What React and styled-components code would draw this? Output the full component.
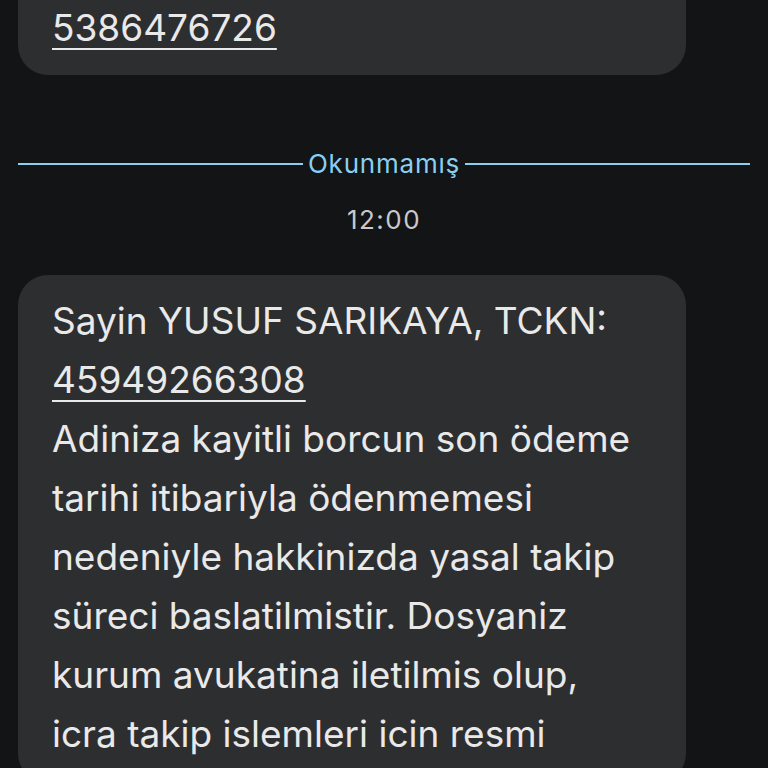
import styled, { createGlobalStyle } from "styled-components";

const Global = createGlobalStyle`
  html, body {
    margin: 0;
    padding: 0;
    background: #131416;
  }
  body {
    font-family: Inter, Roboto, "Noto Sans", sans-serif;
    overflow: hidden;
  }
`;

const Screen = styled.div`
  width: 768px;
  height: 768px;
  overflow: hidden;
  background: #131416;
  display: flex;
  flex-direction: column;
`;

const Bubble = styled.div`
  margin: ${(p) => (p.$cut ? "-2px" : "0")} 82px 0 18px;
  padding: ${(p) => (p.$cut ? "0 34px 18px" : "16px 34px 20px")};
  background: #2d2e30;
  border-radius: ${(p) => (p.$cut ? "0 0 30px 30px" : "30px")};
  color: #e9e9ea;
  font-size: 37px;
  line-height: 59px;
`;

const Num = styled.span`
  text-decoration: underline;
  text-decoration-thickness: 2px;
  text-underline-offset: 7px;
`;

const Divider = styled.div`
  display: flex;
  align-items: center;
  gap: 5px;
  margin: 74px 18px 0 18px;
  color: #8acff0;
  font-size: 26px;
  letter-spacing: 0.8px;
  line-height: 30px;

  &::before,
  &::after {
    content: "";
    flex: 1;
    height: 2px;
    background: #8acff0;
  }
`;

const Time = styled.div`
  text-align: center;
  color: #c9c9ca;
  font-size: 26px;
  letter-spacing: 1.5px;
  line-height: 30px;
  margin: 26px 0 40px;
`;

export default function App() {
  return (
    <Screen>
      <Global />
      <Bubble $cut>
        <Num>5386476726</Num>
      </Bubble>
      <Divider>Okunmamış</Divider>
      <Time>12:00</Time>
      <Bubble>
        Sayin YUSUF SARIKAYA, TCKN:
        <br />
        <Num>45949266308</Num>
        <br />
        Adiniza kayitli borcun son ödeme tarihi itibariyla ödenmemesi nedeniyle
        hakkinizda yasal takip süreci baslatilmistir. Dosyaniz kurum avukatina
        iletilmis olup, icra takip islemleri icin resmi
      </Bubble>
    </Screen>
  );
}
